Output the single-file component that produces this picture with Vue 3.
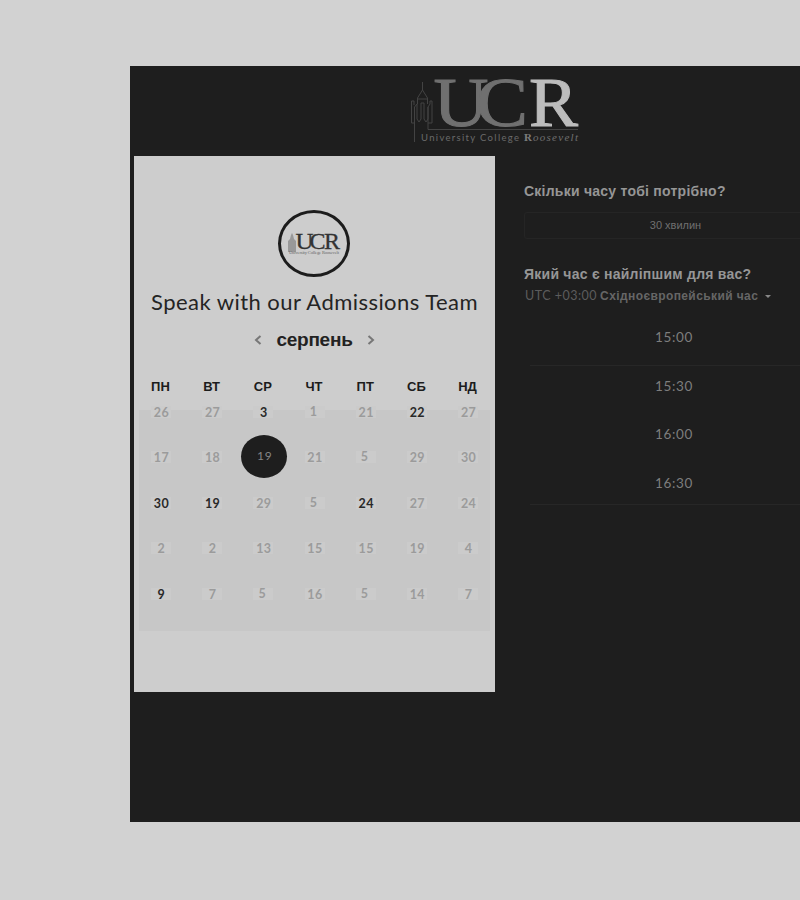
<script setup>
const weekdays = ['ПН', 'ВТ', 'СР', 'ЧТ', 'ПТ', 'СБ', 'НД']
const weeks = [
  [26, 27, 3, 1, 21, 22, 27],
  [17, 18, 19, 21, 5, 29, 30],
  [30, 19, 29, 5, 24, 27, 24],
  [2, 2, 13, 15, 15, 19, 4],
  [9, 7, 5, 16, 5, 14, 7],
]
const open = ['0-2', '0-5', '2-0', '2-1', '2-4', '4-0']
const cells = weeks.flatMap((w, r) =>
  w.map((n, c) => ({
    n,
    key: `${r}-${c}`,
    open: open.includes(`${r}-${c}`),
    selected: r === 1 && c === 2,
    raised: n === 5 || n === 1,
  }))
)
const times = ['15:00', '15:30', '16:00', '16:30']
</script>

<template>
  <div class="page">
    <main class="widget">
      <header class="brand">
        <svg class="logo" viewBox="0 0 180 76" width="180" height="76">
          <g fill="none" stroke="#434343" stroke-width="1">
            <path d="M17.500 9V17M17.500 17L12.500 25V31M17.500 17L22.500 25V31M12.500 26H22.500" />
            <path d="M6.500 50V28H9V32M6.500 50H9.500V69M9.500 50V34L12 31V46L14 49L16 46V30H19V46L21 49L23 46V34L25 31V28H27V50H23" />
            <path d="M23 34V56.500H173" />
          </g>
          <g font-family="'Liberation Serif', serif" stroke-width="1">
            <text x="28.500" y="52.500" font-size="69" textLength="55" lengthAdjust="spacingAndGlyphs" fill="#707070" stroke="#707070">U</text>
            <text x="71" y="52.500" font-size="69" textLength="52" lengthAdjust="spacingAndGlyphs" fill="#707070" stroke="#707070">C</text>
            <text x="124" y="52.500" font-size="69" textLength="49" lengthAdjust="spacingAndGlyphs" fill="#bdbdbd" stroke="#bdbdbd">R</text>
          </g>
          <text x="16" y="67.500" font-family="Lato, sans-serif" font-size="9.500" textLength="98" fill="#6a6a6a">University College</text>
          <text x="119" y="67.500" font-family="'Liberation Serif', serif" font-size="11" font-weight="700" fill="#7c7c7c">R</text>
          <text x="128" y="67.500" font-family="'Liberation Serif', serif" font-size="11" font-style="italic" textLength="45" fill="#707070">oosevelt</text>
        </svg>
      </header>
      <div class="body">
        <section class="card">
          <div class="avatar">
            <svg class="mark" viewBox="0 0 54 24" width="54" height="24">
              <path d="M1 20V9L3 7L4 3L5 1L6 3L7 7L9 9V20Z" fill="#999" />
              <g font-family="'Liberation Serif', serif" font-size="23" fill="#333" stroke="#333" stroke-width="0.300">
                <text x="8.500" y="17" textLength="18" lengthAdjust="spacingAndGlyphs">U</text>
                <text x="22.500" y="17" textLength="16" lengthAdjust="spacingAndGlyphs">C</text>
                <text x="37" y="17" textLength="16" lengthAdjust="spacingAndGlyphs">R</text>
              </g>
              <text x="2" y="21.500" font-family="'Liberation Serif', serif" font-size="4.500" textLength="50" fill="#666">University College Roosevelt</text>
            </svg>
          </div>
          <h1 class="title">Speak with our Admissions Team</h1>
          <div class="month">
            <svg class="chev" viewBox="0 0 8 10" width="8" height="10"><path d="M6.500 1L2 5L6.500 9" /></svg>
            <span class="month-name">серпень</span>
            <svg class="chev" viewBox="0 0 8 10" width="8" height="10"><path d="M1.500 1L6 5L1.500 9" /></svg>
          </div>
          <div class="weekdays">
            <span v-for="d in weekdays" :key="d">{{ d }}</span>
          </div>
          <div class="days">
            <div v-for="c in cells" :key="c.key" class="cell">
              <span class="day" :class="{ open: c.open, selected: c.selected, raised: c.raised }">{{ c.n }}</span>
            </div>
          </div>
        </section>
        <section class="side">
          <h2 class="q duration-q">Скільки часу тобі потрібно?</h2>
          <div class="duration">30 хвилин</div>
          <h2 class="q time-q">Який час є найліпшим для вас?</h2>
          <div class="zone">
            <span class="utc">UTC +03:00</span>
            <span class="zone-name">Східноєвропейський час</span>
            <span class="caret"></span>
          </div>
          <div class="times">
            <div v-for="t in times" :key="t" class="time">{{ t }}</div>
          </div>
        </section>
      </div>
    </main>
  </div>
</template>

<style>
body { background: #d2d2d2; overflow: hidden; }
</style>

<style scoped>
.page {
  box-sizing: border-box;
  width: 800px;
  height: 900px;
  padding: 66px 0 0 130px;
  overflow: hidden;
  background: #d2d2d2;
  font-family: "Liberation Sans", sans-serif;
}
.widget { width: 670px; height: 756px; background: #1e1e1e; overflow: hidden; }
.brand { height: 90px; padding-left: 275px; box-sizing: border-box; padding-top: 7px; }
.logo, .mark { display: block; overflow: visible; }
.body { display: flex; padding-left: 4px; }
.card {
  display: flex;
  flex-direction: column;
  align-items: center;
  box-sizing: border-box;
  flex: none;
  width: 361px;
  height: 536px;
  padding-top: 54px;
  background: #cdcdcd;
}
.avatar {
  display: flex;
  align-items: center;
  justify-content: center;
  box-sizing: border-box;
  width: 72px;
  height: 67px;
  margin-right: 1px;
  border: 3px solid #1c1c1c;
  border-radius: 50%;
}
.title {
  margin: 11px 0 0;
  font: 400 22px/28px Lato, sans-serif;
  letter-spacing: 0.45px;
  white-space: nowrap;
  color: #242424;
}
.month { display: flex; align-items: center; gap: 14px; height: 28px; margin-top: 10px; }
.month-name { font-size: 19px; font-weight: 700; letter-spacing: -0.25px; color: #222; }
.chev { fill: none; stroke: #777; stroke-width: 2; }
.weekdays {
  display: grid;
  grid-template-columns: repeat(7, 51.2px);
  margin-top: 23px;
  margin-right: 1px;
  height: 20px;
  line-height: 20px;
  text-align: center;
  font-size: 13px;
  font-weight: 700;
  color: #1c1c1c;
}
.days {
  display: grid;
  grid-template-columns: repeat(7, 51.2px);
  grid-template-rows: repeat(5, 45.4px);
  justify-content: center;
  width: 351px;
  height: 221px;
  margin-top: 13px;
  background: #c7c7c7;
}
.cell { display: flex; justify-content: center; align-items: flex-start; }
.day {
  width: 20px;
  height: 12px;
  margin-top: -4px;
  line-height: 13px;
  text-align: center;
  text-indent: 1px;
  font-family: Lato, sans-serif;
  font-size: 12.5px;
  letter-spacing: 0.4px;
  font-weight: 700;
  background: #cbcbcb;
  color: #9b9b9b;
}
.day.open { color: #292929; }
.day.raised { line-height: 12px; text-indent: -2px; }
.day.selected {
  width: 46px;
  height: 43px;
  margin: -20px 0 0 2px;
  line-height: 41px;
  border-radius: 50%;
  background: #1e1e1e;
  color: #858585;
  font-size: 12px;
  font-weight: 400;
  letter-spacing: 0.8px;
}
.side { flex: none; width: 305px; padding: 25px 0 0 29px; box-sizing: border-box; }
.q { margin: 0; height: 20px; font-size: 14px; line-height: 20px; letter-spacing: 0.24px; white-space: nowrap; color: #969696; }
.duration {
  box-sizing: border-box;
  width: 303px;
  height: 27px;
  margin-top: 11px;
  border: 1px solid #252525;
  border-radius: 3px;
  line-height: 25px;
  text-align: center;
  font-size: 11px;
  color: #707070;
}
.time-q { margin-top: 25px; }
.zone { display: flex; align-items: center; height: 18px; margin-top: 3px; white-space: nowrap; color: #666; }
.utc { font-family: Lato, sans-serif; font-size: 12.5px; line-height: 16px; margin: 0 0 0 1px; letter-spacing: 0.5px; color: #5c5c5c; }
.zone-name { margin-left: 3px; font-size: 12px; line-height: 16px; font-weight: 700; letter-spacing: 0.4px; }
.caret { margin-left: 7px; border: 3px solid transparent; border-top-color: #888; border-bottom: 0; }
.times { width: 288px; margin: 12px 0 0 6px; }
.time {
  box-sizing: border-box;
  height: 48.6px;
  padding-top: 10px;
  line-height: 20px;
  text-align: center;
  font-family: Lato, sans-serif;
  font-size: 13.5px;
  letter-spacing: 0.7px;
  color: #7d7d7d;
}
.time:first-child, .time:last-child { border-bottom: 1px solid #272727; }
.time:last-child { height: 42px; }
</style>
